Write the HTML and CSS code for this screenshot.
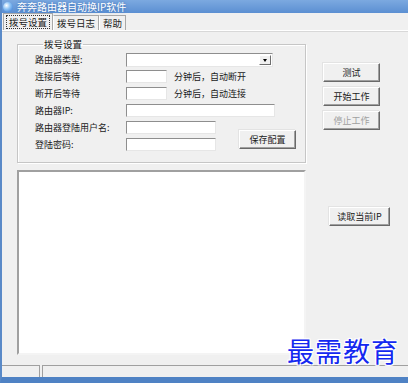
FILE: index.html
```
<!DOCTYPE html>
<html lang="zh-CN">
<head>
    <meta charset="UTF-8">
    <meta name="viewport" content="width=device-width, initial-scale=1.0">
    <title>奔奔路由器自动换IP软件</title>
    <link rel="stylesheet" href="styles.css">
</head>
<body>
    <div class="window">
        <div class="titlebar">
            <span class="app-icon"></span>
            <span class="title">奔奔路由器自动换IP软件</span>
        </div>

        <div class="tabs">
            <div class="tab active"><span class="focus">拨号设置</span></div>
            <div class="tab">拨号日志</div>
            <div class="tab">帮助</div>
        </div>

        <div class="page">
            <div class="main">
                <fieldset class="group">
                    <legend>拨号设置</legend>
                    <div class="form">
                        <label class="row1">路由器类型:</label>
                        <div class="select row1"><span class="arrow"></span></div>

                        <label class="row2">连接后等待</label>
                        <div class="wait row2"><span class="field short"></span><span>分钟后，自动断开</span></div>

                        <label class="row3">断开后等待</label>
                        <div class="wait row3"><span class="field short"></span><span>分钟后，自动连接</span></div>

                        <label class="row4">路由器IP:</label>
                        <span class="field ip row4"></span>

                        <label class="row5">路由器登陆用户名:</label>
                        <span class="field row5"></span>

                        <label class="row6">登陆密码:</label>
                        <span class="field row6"></span>

                        <button class="btn save">保存配置</button>
                    </div>
                </fieldset>
                <div class="log"></div>
            </div>

            <div class="side">
                <button class="btn">测试</button>
                <button class="btn">开始工作</button>
                <button class="btn" disabled>停止工作</button>
                <button class="btn read-ip">读取当前IP</button>
            </div>
        </div>

        <div class="statusbar">
            <div class="panel first"></div>
            <div class="panel"></div>
        </div>

        <div class="watermark">最需教育</div>
    </div>
</body>
</html>
```

FILE: styles.css
```
* { box-sizing: border-box; }
body {
    margin: 0;
    background: #f0f0f0;
    font-family: "Noto Sans CJK SC", "Liberation Sans", sans-serif;
    font-size: 9px;
    color: #1a1a1a;
}

.window {
    position: relative;
    width: 408px;
    height: 383px;
    display: flex;
    flex-direction: column;
    border-left: 2px solid #5a8ac8;
    border-bottom: 6px solid #4f82c4;
    background: #f0f0f0;
    overflow: hidden;
}

.titlebar {
    height: 13px;
    margin-left: -2px;
    display: flex;
    align-items: center;
    background: linear-gradient(#7ca9e0, #5b8fd2);
    color: #fff;
}
.app-icon {
    width: 10px;
    height: 10px;
    margin: 0 4px 0 3px;
    border-radius: 50%;
    background: radial-gradient(circle at 35% 35%, #ffffff, #8fc4f5 40%, #2a6fcf);
}
.title {
    font-size: 10px;
    line-height: 13px;
    text-shadow: 0 0 3px #3a6cb0;
}

.tabs {
    height: 18px;
    display: flex;
    align-items: flex-end;
    padding: 0 0 0 1px;
    border-bottom: 1px solid #ffffff;
    box-shadow: 0 1px 0 #d8d8d8;
}
.tab {
    height: 15px;
    padding: 0 3px;
    font-size: 9.5px;
    line-height: 14px;
    border: 1px solid #a8a8a8;
    border-bottom: none;
    border-left-color: #ffffff;
    background: #f0f0f0;
}
.tab.active {
    height: 17px;
    padding: 1px 2px 0;
    border-left-color: #a8a8a8;
}
.focus {
    display: block;
    padding: 0 2px;
    line-height: 12px;
    border: 1px dotted #333;
}

.page {
    flex: 1;
    display: flex;
    padding: 8px 0 0 15px;
}
.main {
    width: 289px;
    display: flex;
    flex-direction: column;
}

.group {
    height: 124px;
    margin: 0;
    padding: 0 0 0 17px;
    border: 1px solid #c6c6c6;
    box-shadow: inset 1px 1px 0 #ffffff, 1px 1px 0 #ffffff;
}
.group legend {
    margin-left: 8px;
    padding: 0 1px;
    font-size: 9.5px;
    line-height: 10px;
}

.form {
    display: grid;
    grid-template-columns: 91px 90px 1fr;
    grid-template-rows: repeat(5, 17px) 15px;
    margin-top: 4px;
}
.form label {
    grid-column: 1;
    line-height: 14px;
}
.row1 { grid-row: 1; }
.row2 { grid-row: 2; }
.row3 { grid-row: 3; }
.row4 { grid-row: 4; }
.row5 { grid-row: 5; }
.row6 { grid-row: 6; }

.field {
    display: block;
    height: 13px;
    background: #ffffff;
    border: 1px solid;
    border-color: #8e8e8e #e6e6e6 #e6e6e6 #8e8e8e;
}
.form .field { grid-column: 2; }
.field.short { width: 41px; }
.form .field.ip {
    grid-column: 2 / 4;
    width: 149px;
}
.select {
    grid-column: 2 / 4;
    width: 147px;
    height: 14px;
    display: flex;
    justify-content: flex-end;
    padding: 1px;
    background: #ffffff;
    border: 1px solid;
    border-color: #8e8e8e #e6e6e6 #e6e6e6 #8e8e8e;
}
.arrow {
    width: 12px;
    height: 10px;
    background: #f0f0f0;
    border: 1px solid;
    border-color: #ffffff #6e6e6e #6e6e6e #ffffff;
    position: relative;
}
.arrow::after {
    content: "";
    position: absolute;
    left: 3px;
    top: 3px;
    border: 2.5px solid transparent;
    border-top: 3px solid #000;
}
.wait {
    grid-column: 2 / 4;
    display: flex;
    gap: 7px;
    line-height: 13px;
}

.btn {
    height: 19px;
    padding: 0;
    font-family: inherit;
    font-size: 9px;
    color: #1a1a1a;
    background: #f0f0f0;
    border: 1px solid;
    border-color: #ffffff #696969 #696969 #ffffff;
    box-shadow: inset -1px -1px 0 #a0a0a0, -1px -1px 0 #e3e3e3;
}
.btn:disabled { color: #a0a0a0; }
.save {
    grid-column: 3;
    grid-row: 5 / 7;
    align-self: end;
    width: 57px;
    margin: 0 0 4px 23px;
}

.log {
    flex: 1;
    margin: 7px 0 10px;
    background: #ffffff;
    border: 2px solid;
    border-color: #a0a0a0 #f4f4f4 #f4f4f4 #a0a0a0;
}

.side {
    display: flex;
    flex-direction: column;
    gap: 5px;
    padding: 24px 0 0 17px;
}
.side .btn { width: 57px; }
.side .read-ip {
    width: 61px;
    margin: 72px 0 0 6px;
}

.statusbar {
    height: 12px;
    display: flex;
    gap: 2px;
}
.panel {
    flex: 1;
    border-top: 1px solid #a0a0a0;
    border-left: 1px solid #a0a0a0;
}
.panel.first {
    flex: 0 0 38px;
    border-left: none;
    border-right: 1px solid #a0a0a0;
}

.watermark {
    position: absolute;
    right: 9px;
    bottom: 11px;
    font-size: 27px;
    line-height: 30px;
    letter-spacing: 1px;
    color: #1428f0;
    text-shadow: 1px 1px 0 #fff, -1px -1px 0 #fff, 1px -1px 0 #fff, -1px 1px 0 #fff, 0 0 3px #fff;
}
```
